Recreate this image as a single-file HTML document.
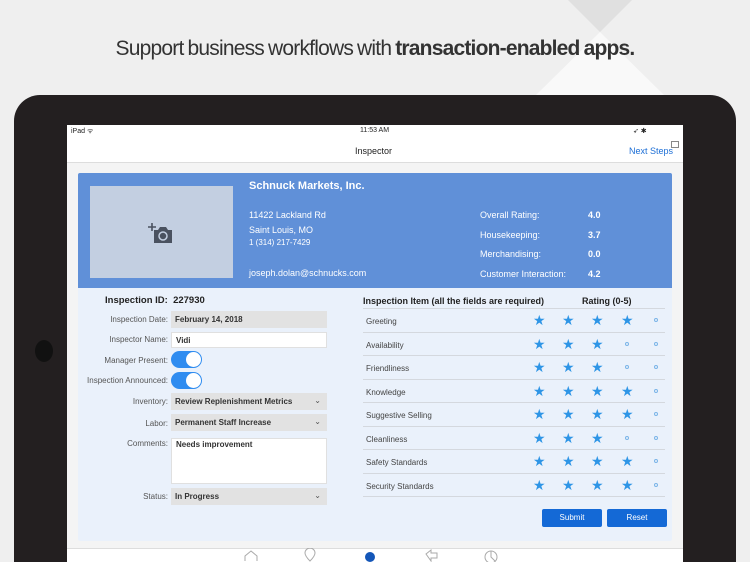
<!DOCTYPE html>
<html style="overflow:hidden;width:750px;height:562px"><head><meta charset="utf-8"><style>
*{margin:0;padding:0;box-sizing:border-box}
body{width:750px;height:562px;overflow:hidden;background:#efefef;font-family:"Liberation Sans",sans-serif;position:relative}
.abs{position:absolute}
.lbl{position:absolute;right:582px;font-size:8px;color:#555;text-align:right;white-space:nowrap}
.fld{position:absolute;left:171px;width:156px;height:17px;background:#e2e2e2;font-size:8px;font-weight:bold;color:#333;padding:4px 4px}
.chev{position:absolute;right:6px;top:3px;font-size:8px;color:#555;font-weight:normal}
.tog{position:absolute;left:171px;width:31px;height:17px;border-radius:9px;background:#2f8cf0}
.tog:after{content:"";position:absolute;right:1px;top:1px;width:15px;height:15px;border-radius:50%;background:#fff}
.row{position:absolute;left:363px;width:302px;height:23.5px;border-bottom:1px solid #d4d8de;font-size:8px;color:#444;padding-top:8px;padding-left:3px}
.st{position:absolute;top:4px;font-size:14px;color:#2e95e6;line-height:14px}
.dt{position:absolute;top:9px;width:4px;height:4px;border:1px solid #7ab4e8;border-radius:50%}
.btn{position:absolute;top:509px;width:60px;height:18px;background:#1469d6;border-radius:2px;color:#fff;font-size:8px;text-align:center;line-height:18px}
</style></head><body>
<svg class="abs" style="left:0;top:0" width="750" height="100">
<polygon points="568,0 632,0 600,32" fill="#e0e0e0"/>
<polygon points="600,32 665,96 535,96" fill="#f9f9f9"/>
</svg>
<div class="abs" style="left:0;top:37px;width:750px;text-align:center;font-size:21px;color:#333;letter-spacing:-0.8px;word-spacing:-1px">Support business workflows with <b>transaction-enabled apps.</b></div>
<div class="abs" style="left:14px;top:95px;width:722px;height:467px;background:#231f20;border-radius:26px 26px 0 0"></div>
<div class="abs" style="left:35px;top:340px;width:18px;height:22px;border-radius:50%;background:#111"></div>
<div class="abs" style="left:67px;top:125px;width:616px;height:437px;background:#f4f4f4"></div>
<div class="abs" style="left:67px;top:125px;width:616px;height:38px;background:#fff;border-bottom:1px solid #ddd"></div>
<div class="abs" style="left:71px;top:127px;font-size:7px;color:#222">iPad ᯤ</div>
<div class="abs" style="left:360px;top:127px;font-size:7px;color:#222">11:53 AM</div>
<div class="abs" style="left:633px;top:127px;font-size:7px;color:#222">➶ ✱</div>
<div class="abs" style="left:355px;top:146px;font-size:9px;color:#222">Inspector</div>
<div class="abs" style="left:629px;top:146px;font-size:9px;color:#1d6fd6">Next Steps</div>
<div class="abs" style="left:671px;top:141px;width:8px;height:7px;border:1px solid #888"></div>
<div class="abs" style="left:78px;top:173px;width:594px;height:368px;background:#eaf1fb;border-radius:2px"></div>
<div class="abs" style="left:78px;top:173px;width:594px;height:115px;background:#6090d8;border-radius:2px 2px 0 0"></div>
<div class="abs" style="left:90px;top:186px;width:143px;height:92px;background:#c3cfe1"></div>
<svg class="abs" style="left:148px;top:222px" width="26" height="22"><path d="M4 1v8M0 5h8" stroke="#4a5260" stroke-width="1.6"/><path d="M6 8h4l2-3h6l2 3h4v13H6z" fill="#4a5260"/><circle cx="15" cy="14" r="4" fill="none" stroke="#c3cfe1" stroke-width="1.5"/></svg>
<div class="abs" style="left:249px;top:180px;font-size:11px;font-weight:bold;color:#fff">Schnuck Markets, Inc.</div>
<div class="abs" style="left:249px;top:208px;font-size:9px;color:#fff;line-height:15px">11422 Lackland Rd<br>Saint Louis, MO</div>
<div class="abs" style="left:249px;top:238px;font-size:8px;color:#fff">1 (314) 217-7429</div>
<div class="abs" style="left:249px;top:268px;font-size:9px;color:#fff">joseph.dolan@schnucks.com</div>
<div class="abs" style="left:480px;top:206px;font-size:9px;color:#fff;line-height:19.6px">Overall Rating:<br>Housekeeping:<br>Merchandising:<br>Customer Interaction:</div>
<div class="abs" style="left:588px;top:206px;font-size:9px;font-weight:bold;color:#fff;line-height:19.6px">4.0<br>3.7<br>0.0<br>4.2</div>
<div class="abs" style="left:105px;top:295px;font-size:9.5px;font-weight:bold;color:#222">Inspection ID: &nbsp;227930</div>
<div class="lbl" style="top:315px">Inspection Date:</div><div class="fld" style="top:311px">February 14, 2018</div>
<div class="lbl" style="top:335px">Inspector Name:</div><div class="fld" style="top:332px;height:16px;background:#fff;border:1px solid #e0e0e0;padding-top:3px">Vidi</div>
<div class="lbl" style="top:356px">Manager Present:</div><div class="tog" style="top:351px"></div>
<div class="lbl" style="top:376px">Inspection Announced:</div><div class="tog" style="top:372px"></div>
<div class="lbl" style="top:397px">Inventory:</div><div class="fld" style="top:393px">Review Replenishment Metrics<span class="chev">⌄</span></div>
<div class="lbl" style="top:419px">Labor:</div><div class="fld" style="top:414px">Permanent Staff Increase<span class="chev">⌄</span></div>
<div class="lbl" style="top:439px">Comments:</div><div class="fld" style="top:438px;height:46px;background:#fff;border:1px solid #e0e0e0;padding-top:1px">Needs improvement</div>
<div class="lbl" style="top:492px">Status:</div><div class="fld" style="top:488px">In Progress<span class="chev">⌄</span></div>
<div class="abs" style="left:363px;top:296px;font-size:9px;font-weight:bold;color:#222">Inspection Item (all the fields are required)</div>
<div class="abs" style="left:582px;top:296px;font-size:9px;font-weight:bold;color:#222">Rating (0-5)</div>
<div class="abs" style="left:363px;top:308px;width:302px;border-top:1px solid #d4d8de"></div>
<div id="rows"></div>
<div class="btn" style="left:542px">Submit</div>
<div class="btn" style="left:607px">Reset</div>
<div class="abs" style="left:67px;top:548px;width:616px;height:14px;background:#fff;border-top:1px solid #ddd"></div>
<svg class="abs" style="left:240px;top:548px" width="270" height="14">
<path d="M5 13V8l6-5 6 5v5" fill="none" stroke="#aaa"/>
<path d="M70 13c-4-4-5-6-5-8a5 5 0 0110 0c0 2-1 4-5 8z" fill="none" stroke="#aaa"/>
<circle cx="130" cy="9" r="5" fill="#1456b8"/>
<path d="M186 6l5-4v3h6v5h-6v3z" fill="none" stroke="#aaa"/>
<circle cx="251" cy="9" r="6" fill="none" stroke="#aaa"/><path d="M251 3v6l4 4" fill="none" stroke="#aaa"/>
</svg>
<script>
var items=[["Greeting",4],["Availability",3],["Friendliness",3],["Knowledge",4],["Suggestive Selling",4],["Cleanliness",3],["Safety Standards",4],["Security Standards",4]];
var xs=[533,562,591,621,650],h="";
items.forEach(function(it,i){var top=309+i*23.5;h+='<div class="row" style="top:'+top+'px">'+it[0];
for(var k=0;k<5;k++){var l=xs[k]-363;h+=k<it[1]?'<span class="st" style="left:'+l+'px">★</span>':'<span class="dt" style="left:'+(l+4)+'px"></span>';}
h+='</div>';});
document.getElementById('rows').innerHTML=h;
</script>
</body></html>
